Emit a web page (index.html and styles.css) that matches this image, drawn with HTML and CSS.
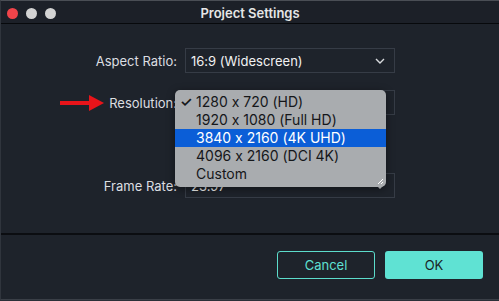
FILE: index.html
```html
<!DOCTYPE html>
<html lang="en">
  <head>
    <meta charset="UTF-8" />
    <meta name="viewport" content="width=device-width, initial-scale=1.0" />
    <title>Project Settings</title>
    <link rel="stylesheet" href="styles.css">
  </head>
  <body>
    <div class="window">
      <div class="titlebar">
        <div class="lights">
          <span class="light red"></span>
          <span class="light"></span>
          <span class="light"></span>
        </div>
        <div class="title">Project Settings</div>
      </div>

      <div class="form">
        <div class="row">
          <label class="label">Aspect Ratio:</label>
          <div class="select">
            <span>16:9 (Widescreen)</span>
            <svg class="chev" width="10" height="6" viewBox="0 0 10 6"><path d="M1 1l4 4 4-4" fill="none" stroke="#d8dadd" stroke-width="1.4"/></svg>
          </div>
        </div>

        <div class="row">
          <label class="label">
            <svg class="arrow" width="44" height="16" viewBox="0 0 44 16"><path d="M0 6h29V0l15 8-15 8v-6H0z" fill="#e8141a"/></svg>
            Resolution:
          </label>
          <div class="select">
            <span class="hidden">3840 x 2160 (4K UHD)</span>
            <svg class="chev" width="10" height="6" viewBox="0 0 10 6"><path d="M1 1l4 4 4-4" fill="none" stroke="#d8dadd" stroke-width="1.4"/></svg>
            <ul class="menu">
              <li><span class="check">✓</span>1280 x 720 (HD)</li>
              <li>1920 x 1080 (Full HD)</li>
              <li class="active">3840 x 2160 (4K UHD)</li>
              <li>4096 x 2160 (DCI 4K)</li>
              <li>Custom</li>
              <svg class="grip" width="7" height="7" viewBox="0 0 7 7"><path d="M1 6L6 1M4 6L6 4" stroke="#fff" stroke-width="1"/></svg>
            </ul>
          </div>
        </div>

        <div class="row spacer"></div>

        <div class="row">
          <label class="label">Frame Rate:</label>
          <div class="select">
            <span>23.97</span>
            <svg class="chev" width="10" height="6" viewBox="0 0 10 6"><path d="M1 1l4 4 4-4" fill="none" stroke="#d8dadd" stroke-width="1.4"/></svg>
          </div>
        </div>
      </div>

      <div class="footer">
        <button class="btn cancel">Cancel</button>
        <button class="btn ok">OK</button>
      </div>
    </div>
  </body>
</html>
```

FILE: styles.css
```css
body {
  margin: 0;
  background: #2b3038;
  font-family: Inter, "Liberation Sans", sans-serif;
  font-feature-settings: "calt" 0;
  -webkit-font-smoothing: antialiased;
}
.window {
  width: 498px;
  height: 298px;
  background: #1e232b;
  border-top: 1px solid #4a4e55;
  border-left: 1px solid #30353d;
  border-bottom: 1px solid #3a3f47;
  display: flex;
  flex-direction: column;
}
.titlebar {
  height: 22px;
  border-bottom: 1px solid #07090c;
  display: flex;
  align-items: center;
  position: relative;
  background: #1c2028;
}
.lights {
  display: flex;
  gap: 8px;
  padding-left: 6px;
  padding-top: 2px;
}
.light {
  width: 11px;
  height: 11px;
  border-radius: 50%;
  background: #d3d3d3;
}
.light.red {
  background: #f0444a;
}
.title {
  position: absolute;
  left: 0;
  right: 0;
  top: 4px;
  text-align: center;
  color: #e6e6e6;
  font-size: 13px;
  font-weight: 600;
}
.form {
  flex: 1;
  padding-top: 24px;
  display: flex;
  flex-direction: column;
  gap: 17px;
  border-bottom: 2px solid #0b0d11;
}
.row {
  display: grid;
  grid-template-columns: 176px 210px;
  column-gap: 8px;
  align-items: center;
  height: 25px;
}
.row.spacer {
  height: 24px;
}
.label {
  text-align: right;
  color: #dcdee1;
  font-size: 13px;
  display: flex;
  justify-content: flex-end;
  align-items: center;
}
.arrow {
  margin-right: 5px;
}
.select {
  position: relative;
  height: 23px;
  border: 1px solid #363c46;
  display: flex;
  align-items: center;
  justify-content: space-between;
  padding: 0 9px 0 5px;
  color: #f2f2f2;
  font-size: 13px;
}
.hidden {
  visibility: hidden;
}
.menu {
  position: absolute;
  left: -11px;
  top: -1px;
  width: 211px;
  margin: 0;
  padding: 3px 0 4px;
  list-style: none;
  background: #a9acaf;
  border-radius: 5px;
  box-shadow: 0 2px 8px rgba(0, 0, 0, 0.45);
  z-index: 2;
}
.menu li {
  height: 18px;
  line-height: 18px;
  padding-left: 21px;
  color: #15171a;
  font-size: 14px;
  position: relative;
}
.menu li.active {
  background: #0b5ed7;
  color: #fff;
}
.check {
  position: absolute;
  left: 5px;
  font-size: 14px;
  font-weight: 600;
}
.grip {
  position: absolute;
  right: 2px;
  bottom: 2px;
}
.footer {
  height: 64px;
  display: flex;
  justify-content: flex-end;
  align-items: flex-start;
  gap: 10px;
  padding: 16px 16px 0 0;
  box-sizing: border-box;
}
.btn {
  width: 98px;
  height: 28px;
  border-radius: 3px;
  font-family: Inter, "Liberation Sans", sans-serif;
  font-size: 13px;
  cursor: pointer;
}
.cancel {
  background: transparent;
  border: 1.5px solid #5cdccb;
  color: #5ee0d2;
}
.ok {
  background: #5fe2d3;
  border: none;
  color: #1a1f26;
}
```
